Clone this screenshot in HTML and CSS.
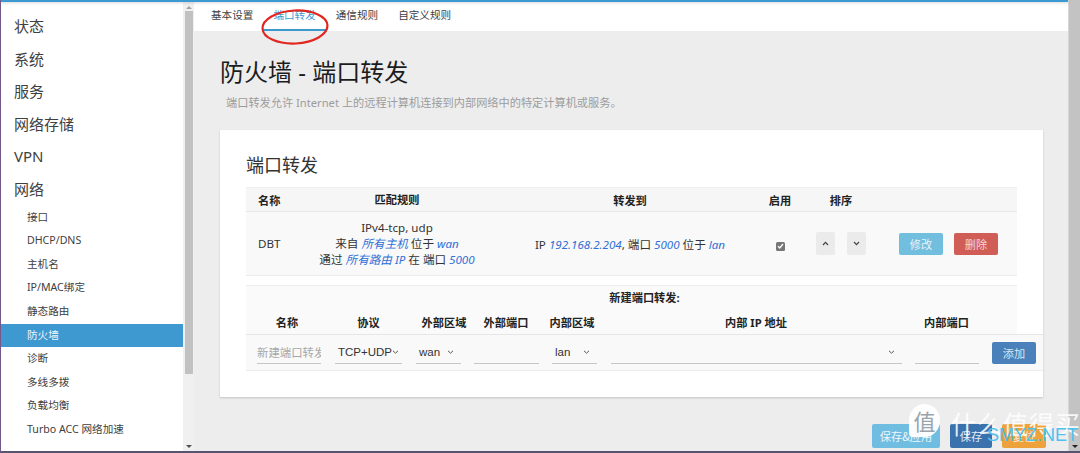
FILE: index.html
```html
<!DOCTYPE html>
<html lang="zh-CN">
<head>
<meta charset="utf-8">
<title>防火墙 - 端口转发</title>
<link rel="stylesheet" href="styles.css">
</head>
<body>
<div class="screen">
  <div class="frame">
    <div class="topbar"></div>
    <div class="body-row">
      <aside class="sidebar">
        <nav class="menu">
          <div class="menu-top">状态</div>
          <div class="menu-top">系统</div>
          <div class="menu-top">服务</div>
          <div class="menu-top">网络存储</div>
          <div class="menu-top">VPN</div>
          <div class="menu-top">网络</div>
          <div class="menu-sub">接口</div>
          <div class="menu-sub">DHCP/DNS</div>
          <div class="menu-sub">主机名</div>
          <div class="menu-sub">IP/MAC绑定</div>
          <div class="menu-sub">静态路由</div>
          <div class="menu-sub active">防火墙</div>
          <div class="menu-sub">诊断</div>
          <div class="menu-sub">多线多拨</div>
          <div class="menu-sub">负载均衡</div>
          <div class="menu-sub">Turbo ACC 网络加速</div>
        </nav>
      </aside>
      <div class="side-scroll">
        <span class="arrow-up"></span>
        <div class="side-thumb"></div>
        <span class="arrow-down"></span>
      </div>
      <main class="main">
        <div class="tabs">
          <a class="tab">基本设置</a>
          <a class="tab active">端口转发</a>
          <a class="tab">通信规则</a>
          <a class="tab">自定义规则</a>
        </div>
        <div class="content">
          <h2 class="page-title">防火墙 - 端口转发</h2>
          <p class="page-desc">端口转发允许 Internet 上的远程计算机连接到内部网络中的特定计算机或服务。</p>
          <section class="card">
            <h3 class="card-title">端口转发</h3>
            <div class="fw-table">
              <div class="tr th">
                <div class="c-name">名称</div>
                <div class="c-match">匹配规则</div>
                <div class="c-fwd">转发到</div>
                <div class="c-en">启用</div>
                <div class="c-sort">排序</div>
                <div class="c-act"></div>
              </div>
              <div class="tr td">
                <div class="c-name">DBT</div>
                <div class="c-match">
                  <div>IPv4-tcp, udp</div>
                  <div>来自 <i>所有主机</i> 位于 <i>wan</i></div>
                  <div>通过 <i>所有路由 IP</i> 在 端口 <i>5000</i></div>
                </div>
                <div class="c-fwd">IP <i>192.168.2.204</i>, 端口 <i>5000</i> 位于 <i>lan</i></div>
                <div class="c-en"><span class="chk"><svg width="7" height="6" viewBox="0 0 7 6"><path d="M1 3.2 L2.8 5 L6 1" fill="none" stroke="#fff" stroke-width="1.3"/></svg></span></div>
                <div class="c-sort">
                  <span class="sort-btn"><svg width="7" height="5" viewBox="0 0 7 5"><path d="M1 4 L3.5 1.3 L6 4" fill="none" stroke="#444" stroke-width="1.2"/></svg></span>
                  <span class="sort-btn"><svg width="7" height="5" viewBox="0 0 7 5"><path d="M1 1 L3.5 3.7 L6 1" fill="none" stroke="#444" stroke-width="1.2"/></svg></span>
                </div>
                <div class="c-act">
                  <button class="btn btn-edit">修改</button>
                  <button class="btn btn-del">删除</button>
                </div>
              </div>
            </div>

            <div class="new-section">
              <div class="new-head">
                <div class="new-title">新建端口转发:</div>
                <div class="new-grid new-cols">
                  <div>名称</div>
                  <div>协议</div>
                  <div class="h-ext">外部区域</div>
                  <div>外部端口</div>
                  <div class="h-int">内部区域</div>
                  <div>内部 IP 地址</div>
                  <div>内部端口</div>
                  <div></div>
                </div>
              </div>
              <div class="new-grid new-inputs">
                <div><input class="fld w-name" placeholder="新建端口转发"></div>
                <div><span class="sel w-proto">TCP+UDP<svg class="chev" width="7" height="4" viewBox="0 0 7 4"><path d="M1 0.8 L3.5 3.2 L6 0.8" fill="none" stroke="#555" stroke-width="1"/></svg></span></div>
                <div><span class="sel w-zone">wan<svg class="chev" width="7" height="4" viewBox="0 0 7 4"><path d="M1 0.8 L3.5 3.2 L6 0.8" fill="none" stroke="#555" stroke-width="1"/></svg></span></div>
                <div><input class="fld w-port"></div>
                <div><span class="sel w-zone">lan<svg class="chev" width="7" height="4" viewBox="0 0 7 4"><path d="M1 0.8 L3.5 3.2 L6 0.8" fill="none" stroke="#555" stroke-width="1"/></svg></span></div>
                <div><span class="sel w-ip"><span></span><svg class="chev" width="7" height="4" viewBox="0 0 7 4"><path d="M1 0.8 L3.5 3.2 L6 0.8" fill="none" stroke="#555" stroke-width="1"/></svg></span></div>
                <div><input class="fld w-iport"></div>
                <div><button class="btn btn-add">添加</button></div>
              </div>
            </div>
          </section>
          <div class="actions">
            <button class="btn btn-apply">保存&amp;应用</button>
            <button class="btn btn-save">保存</button>
            <button class="btn btn-reset">复位</button>
          </div>
        </div>
      </main>
    </div>
  </div>
  <div class="win-scroll"><span class="arrow-down dark"></span></div>

  <svg class="annot" width="76" height="44" viewBox="0 0 76 44"><ellipse cx="37" cy="21" rx="32.5" ry="16.5" fill="none" stroke="#e3251f" stroke-width="2.2" transform="rotate(-3 37 21)"/></svg>

  <div class="watermark">
    <span class="wm-logo">值</span>
    <span class="wm-text">什么值得买</span>
    <span class="wm-site">SMYZ.NET</span>
  </div>
</div>
</body>
</html>
```
FILE: styles.css
```css
* { box-sizing: border-box; }
html, body { margin: 0; padding: 0; }
body {
  width: 1080px;
  height: 453px;
  overflow: hidden;
  font-family: "Noto Sans", "Noto Sans CJK SC", sans-serif;
  color: #333;
}
.screen {
  position: relative;
  width: 1080px;
  height: 453px;
  display: flex;
  border-left: 1px solid #74598a;
  border-bottom: 2px solid #57546f;
  overflow: hidden;
}
.frame {
  flex: 1;
  display: flex;
  flex-direction: column;
  min-width: 0;
}
.topbar {
  height: 2px;
  background: #3c9ad3;
  box-shadow: 0 1px 3px rgba(0,0,0,0.18);
  position: relative;
  z-index: 2;
}
.body-row {
  flex: 1;
  display: flex;
  min-height: 0;
}

/* sidebar */
.sidebar {
  width: 182px;
  background: #fff;
  overflow: hidden;
}
.menu { padding-top: 8px; }
.menu-top {
  height: 32.6px;
  line-height: 32.6px;
  font-size: 15px;
  padding-left: 13px;
  color: #404040;
  white-space: nowrap;
}
.menu-sub {
  height: 23.6px;
  line-height: 23.6px;
  font-size: 10.6px;
  padding-left: 26px;
  color: #404040;
  white-space: nowrap;
}
.menu-sub.active {
  background: #3d99d0;
  color: #eef6fc;
}
.side-scroll {
  width: 11px;
  background: #f0f0f0;
  display: flex;
  flex-direction: column;
  align-items: center;
}
.side-thumb {
  width: 8px;
  height: 363px;
  background: #c1c1c1;
  margin-top: 2px;
}
.arrow-up {
  margin-top: 4px;
  width: 0; height: 0;
  border-left: 3px solid transparent;
  border-right: 3px solid transparent;
  border-bottom: 3px solid #a3a3a3;
}
.arrow-down {
  margin-top: auto;
  margin-bottom: 3px;
  width: 0; height: 0;
  border-left: 3px solid transparent;
  border-right: 3px solid transparent;
  border-top: 3px solid #505050;
}
.win-scroll {
  width: 12px;
  background: #c3c3c3;
  border-left: 1px solid #d6d6d6;
  display: flex;
  flex-direction: column;
  align-items: center;
}
.win-scroll .arrow-down { border-top-color: #222; margin-bottom: 3px; }

/* main */
.main {
  flex: 1;
  background: #ededed;
  display: flex;
  flex-direction: column;
  min-width: 0;
}
.tabs {
  height: 29px;
  background: #fff;
  display: flex;
  padding-left: 7px;
}
.tab {
  padding: 0 10px;
  font-size: 10.6px;
  line-height: 27px;
  color: #404040;
  border-bottom: 2px solid transparent;
  white-space: nowrap;
}
.tab.active {
  color: #3d99d0;
  border-bottom-color: #3d99d0;
}
.content {
  padding: 0 22px 0 26px;
}
.page-title {
  margin: 26px 0 0 0;
  font-size: 24px;
  line-height: 30px;
  font-weight: normal;
  color: #1c1c1c;
}
.page-desc {
  margin: 8px 0 0 6px;
  font-size: 11.2px;
  line-height: 16px;
  color: #9c9c9c;
}
.card {
  margin-top: 19px;
  width: 823px;
  background: #fff;
  padding: 23px 26px 26px 26px;
  box-shadow: 0 1px 2px rgba(0,0,0,0.18);
}
.card-title {
  margin: 0;
  font-size: 18px;
  line-height: 24px;
  font-weight: normal;
  color: #333;
}

/* table */
.fw-table { margin-top: 10px; }
.tr {
  display: grid;
  grid-template-columns: 71px 160px 270px 66px 56px 1fr;
  align-items: center;
  font-size: 11.2px;
}
.th {
  height: 25px;
  background: #f6f6f6;
  border-top: 1px solid #efefef;
  border-bottom: 1px solid #e8e8e8;
  font-weight: bold;
  color: #222;
}
.td {
  height: 64px;
  background: #f9f9f9;
  border-bottom: 1px solid #ececec;
  color: #333;
  font-size: 11.6px;
}
.c-name { padding-left: 12px; }
.c-match { text-align: center; line-height: 16px; white-space: nowrap; }
.c-fwd { text-align: center; padding-left: 36px; white-space: nowrap; }
.c-en { text-align: center; }
.c-sort { display: flex; justify-content: center; gap: 12px; }
.c-act { display: flex; gap: 11px; padding-left: 30px; }
i { color: #2f6fd6; font-style: italic; }
.th .c-match, .th .c-fwd, .th .c-en, .th .c-sort { text-align: center; }
.chk {
  display: inline-flex;
  align-items: center;
  justify-content: center;
  width: 9px;
  height: 9px;
  background: #767676;
  border-radius: 1.5px;
  vertical-align: middle;
  margin-top: 3px;
}
.sort-btn {
  width: 19px;
  height: 23px;
  background: #ebebeb;
  border-radius: 2px;
  display: flex;
  align-items: center;
  justify-content: center;
}
.btn {
  border: none;
  border-radius: 2px;
  font-family: "Noto Sans CJK SC", sans-serif;
  font-size: 11.2px;
  height: 22px;
  padding: 0;
  cursor: pointer;
}
.btn-edit { width: 44px; background: #72bedf; color: #e6f4fa; }
.btn-del { width: 44px; background: #d05d56; color: #f6d6d3; }
.btn-add { width: 44px; background: #4a81ba; color: #dbe7f3; }

/* new section */
.new-section { margin-top: 9px; }
.new-head {
  background: #fafafa;
  border-top: 1px solid #ececec;
}
.new-title {
  height: 23px;
  line-height: 24px;
  text-align: center;
  font-weight: bold;
  font-size: 11.2px;
  color: #222;
  margin-right: -26px;
}
.new-grid {
  display: grid;
  grid-template-columns: 82px 81px 58px 78px 59px 304px 77px 1fr;
  align-items: center;
}
.new-cols {
  height: 25px;
  font-size: 11.2px;
  font-weight: bold;
  color: #222;
  text-align: center;
}
.new-cols .h-ext { padding-left: 12px; }
.new-cols .h-int { padding-right: 5px; }
.new-inputs {
  height: 37px;
  margin-right: -26px;
  background: #f9f9f9;
  border-top: 1px solid #e6e6e6;
  border-bottom: 1px solid #ececec;
}
.new-inputs > div { padding-left: 7px; }
.new-inputs > div:first-child { padding-left: 11px; }
.fld {
  display: block;
  height: 22px;
  border: none;
  border-bottom: 1px solid #c6c6c6;
  background: transparent;
  font-family: "Noto Sans CJK SC", sans-serif;
  font-size: 11.4px;
  padding: 0;
  outline: none;
}
.fld::placeholder { color: #a8a8a8; }
.sel {
  display: flex;
  align-items: center;
  justify-content: space-between;
  height: 22px;
  border-bottom: 1px solid #c6c6c6;
  font-family: "Liberation Sans", "Noto Sans", sans-serif;
  font-size: 11.5px;
  color: #333;
  padding: 0 7px 0 3px;
}
.w-name { width: 64px; }
.w-proto { width: 67px; }
.w-zone { width: 45px; }
.w-port { width: 65px; }
.w-ip { width: 291px; }
.w-iport { width: 64px; }
.w-proto { padding-right: 3px; }

/* bottom actions */
.actions {
  margin-top: 27px;
  display: flex;
  justify-content: flex-end;
  gap: 10px;
}
.actions .btn { height: 24px; }
.btn-apply { width: 68px; background: #6fbde0; color: #eef7fb; }
.btn-save { width: 42px; background: #3a72ae; color: #e4edf6; }
.btn-reset { width: 44px; background: #eea23c; color: #fcecd6; }

/* overlays */
.annot {
  position: absolute;
  left: 257px;
  top: 6px;
  pointer-events: none;
}
.watermark {
  position: absolute;
  left: 906px;
  top: 402px;
  width: 174px;
  height: 48px;
  pointer-events: none;
}
.wm-logo {
  position: absolute;
  left: 2px;
  top: 2px;
  width: 31px;
  height: 33px;
  border-radius: 50% 50% 50% 12%;
  background: rgba(255,255,255,0.95);
  color: #9aa4ad;
  font-family: "Noto Sans CJK SC", sans-serif;
  font-size: 22px;
  line-height: 33px;
  text-align: center;
}
.wm-text {
  position: absolute;
  left: 44px;
  top: 4px;
  font-family: "Noto Sans CJK SC", sans-serif;
  font-size: 25px;
  line-height: 34px;
  letter-spacing: 1px;
  color: rgba(255,255,255,0.88);
  white-space: nowrap;
}
.wm-site {
  position: absolute;
  left: 80px;
  top: 22px;
  font-family: "Liberation Sans", sans-serif;
  font-size: 18px;
  line-height: 22px;
  color: #4fc1ee;
  white-space: nowrap;
}
```
